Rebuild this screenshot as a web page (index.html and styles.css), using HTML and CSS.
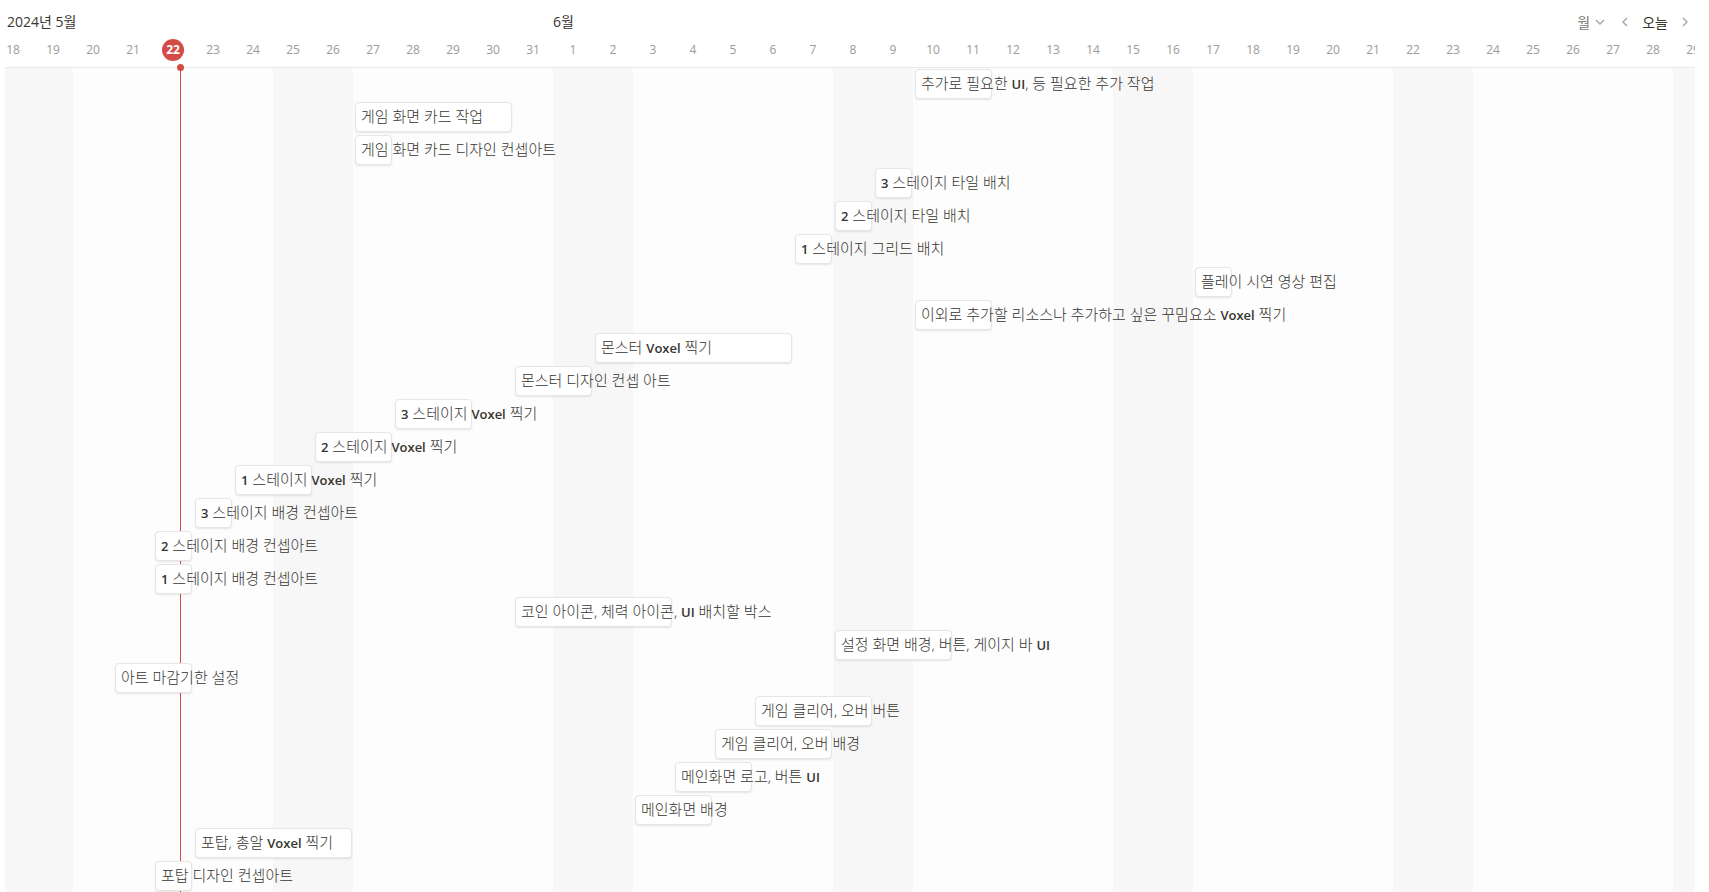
FILE: index.html
```html
<!DOCTYPE html>
<html lang="ko">
<head>
<meta charset="utf-8">
<title>타임라인</title>
<link rel="stylesheet" href="styles.css">
</head>
<body>
<main class="timeline">
  <header class="toolbar">
    <div class="months">
      <span class="month month-first"><span class="num">2024</span>년 <span class="num">5</span>월</span>
      <span class="month month-next"><span class="num">6</span>월</span>
    </div>
    <nav class="controls" aria-label="타임라인 탐색">
      <button class="scale" type="button">월
        <svg class="chevron-down" viewBox="0 0 10 6" aria-hidden="true"><path d="M1 1l4 4 4-4"/></svg>
      </button>
      <button class="step" type="button" aria-label="이전"><svg class="chevron-side" viewBox="0 0 6 10" aria-hidden="true"><path d="M5 1L1 5l4 4"/></svg></button>
      <button class="today" type="button">오늘</button>
      <button class="step" type="button" aria-label="다음"><svg class="chevron-side" viewBox="0 0 6 10" aria-hidden="true"><path d="M1 1l4 4-4 4"/></svg></button>
    </nav>
  </header>
  <div class="days">
    <span>18</span><span>19</span><span>20</span><span>21</span><span><b class="current">22</b></span><span>23</span><span>24</span><span>25</span><span>26</span><span>27</span><span>28</span><span>29</span><span>30</span><span>31</span>
    <span>1</span><span>2</span><span>3</span><span>4</span><span>5</span><span>6</span><span>7</span><span>8</span><span>9</span><span>10</span><span>11</span><span>12</span><span>13</span><span>14</span><span>15</span><span>16</span><span>17</span><span>18</span><span>19</span><span>20</span><span>21</span><span>22</span><span>23</span><span>24</span><span>25</span><span>26</span><span>27</span><span>28</span><span>29</span>
  </div>
  <section class="board">
    <div class="now"></div>
    <div class="rows">
      <div class="row"><div class="bar" style="grid-column: 24 / span 2">추가로 필요한 <span class="en">UI</span>, 등 필요한 추가 작업</div></div>
      <div class="row"><div class="bar" style="grid-column: 10 / span 4">게임 화면 카드 작업</div></div>
      <div class="row"><div class="bar" style="grid-column: 10 / span 1">게임 화면 카드 디자인 컨셉아트</div></div>
      <div class="row"><div class="bar" style="grid-column: 23 / span 1"><span class="en">3</span> 스테이지 타일 배치</div></div>
      <div class="row"><div class="bar" style="grid-column: 22 / span 1"><span class="en">2</span> 스테이지 타일 배치</div></div>
      <div class="row"><div class="bar" style="grid-column: 21 / span 1"><span class="en">1</span> 스테이지 그리드 배치</div></div>
      <div class="row"><div class="bar" style="grid-column: 31 / span 1">플레이 시연 영상 편집</div></div>
      <div class="row"><div class="bar" style="grid-column: 24 / span 2">이외로 추가할 리소스나 추가하고 싶은 꾸밈요소 <span class="en">Voxel</span> 찍기</div></div>
      <div class="row"><div class="bar" style="grid-column: 16 / span 5">몬스터 <span class="en">Voxel</span> 찍기</div></div>
      <div class="row"><div class="bar" style="grid-column: 14 / span 2">몬스터 디자인 컨셉 아트</div></div>
      <div class="row"><div class="bar" style="grid-column: 11 / span 2"><span class="en">3</span> 스테이지 <span class="en">Voxel</span> 찍기</div></div>
      <div class="row"><div class="bar" style="grid-column: 9 / span 2"><span class="en">2</span> 스테이지 <span class="en">Voxel</span> 찍기</div></div>
      <div class="row"><div class="bar" style="grid-column: 7 / span 2"><span class="en">1</span> 스테이지 <span class="en">Voxel</span> 찍기</div></div>
      <div class="row"><div class="bar" style="grid-column: 6 / span 1"><span class="en">3</span> 스테이지 배경 컨셉아트</div></div>
      <div class="row"><div class="bar" style="grid-column: 5 / span 1"><span class="en">2</span> 스테이지 배경 컨셉아트</div></div>
      <div class="row"><div class="bar" style="grid-column: 5 / span 1"><span class="en">1</span> 스테이지 배경 컨셉아트</div></div>
      <div class="row"><div class="bar" style="grid-column: 14 / span 4">코인 아이콘, 체력 아이콘, <span class="en">UI</span> 배치할 박스</div></div>
      <div class="row"><div class="bar" style="grid-column: 22 / span 3">설정 화면 배경, 버튼, 게이지 바 <span class="en">UI</span></div></div>
      <div class="row"><div class="bar" style="grid-column: 4 / span 2">아트 마감기한 설정</div></div>
      <div class="row"><div class="bar" style="grid-column: 20 / span 3">게임 클리어, 오버 버튼</div></div>
      <div class="row"><div class="bar" style="grid-column: 19 / span 3">게임 클리어, 오버 배경</div></div>
      <div class="row"><div class="bar" style="grid-column: 18 / span 2">메인화면 로고, 버튼 <span class="en">UI</span></div></div>
      <div class="row"><div class="bar" style="grid-column: 17 / span 2">메인화면 배경</div></div>
      <div class="row"><div class="bar" style="grid-column: 6 / span 4">포탑, 총알 <span class="en">Voxel</span> 찍기</div></div>
      <div class="row"><div class="bar" style="grid-column: 5 / span 1">포탑 디자인 컨셉아트</div></div>
    </div>
  </section>
</main>
</body>
</html>
```
FILE: styles.css
```css
* {
  box-sizing: border-box;
}

body {
  margin: 0;
  background: #fff;
  color: #37352f;
  font-family: "Open Sans", "Noto Sans CJK KR", sans-serif;
  font-size: 15px;
}

.timeline {
  --day: 40px;
  --shift: -12px;
  display: flex;
  flex-direction: column;
  height: 100vh;
  margin: 0 14px 0 5px;
  overflow: hidden;
}

.toolbar {
  display: flex;
  justify-content: space-between;
  align-items: center;
  flex: none;
  height: 34px;
  padding-top: 10px;
}

.months {
  display: grid;
  grid-template-columns: 548px auto;
  font-size: 14px;
  line-height: 24px;
}

.month {
  white-space: nowrap;
}

.month-first {
  padding-left: 2px;
}

.num {
  font-weight: 500;
  font-size: 14px;
}

.controls {
  display: flex;
  align-items: center;
}

.controls button {
  display: flex;
  align-items: center;
  height: 24px;
  padding: 0;
  border: 0;
  background: none;
  color: inherit;
  font: inherit;
  font-size: 14px;
  cursor: pointer;
}

.controls .scale {
  gap: 5px;
  margin-right: 8px;
  color: #787774;
}

.controls .step {
  justify-content: center;
  width: 24px;
}

.controls .step:last-child {
  width: 20px;
}

.controls .today {
  padding: 0 7px 0 5px;
}

.controls svg {
  fill: none;
  stroke: #a5a4a1;
  stroke-width: 1.4;
}

.chevron-down {
  width: 10px;
  height: 6px;
}

.chevron-side {
  width: 6px;
  height: 10px;
}

.days {
  display: grid;
  grid-template-columns: repeat(43, var(--day));
  flex: none;
  height: 33px;
  margin-left: var(--shift);
  color: #9b9a97;
  font-size: 12px;
  line-height: 32px;
  text-align: center;
}

.current {
  display: inline-block;
  width: 22px;
  height: 22px;
  border-radius: 50%;
  background: #d44c47;
  color: #fff;
  font-weight: 700;
  line-height: 22px;
}

.board {
  position: relative;
  flex: 1;
  border-top: 1px solid #e9e9e8;
}

.rows {
  width: calc(43 * var(--day));
  min-height: 100%;
  margin-left: var(--shift);
  background: repeating-linear-gradient(to right, #f7f7f7 0 80px, #fdfdfd 80px 280px);
}

.now {
  position: absolute;
  top: 0;
  bottom: 0;
  left: 175px;
  width: 1px;
  background: #d44c47;
}

.now::before {
  content: "";
  position: absolute;
  top: -4px;
  left: -3px;
  width: 7px;
  height: 7px;
  border-radius: 50%;
  background: #d44c47;
}

.row {
  display: grid;
  grid-template-columns: repeat(43, var(--day));
  height: 33px;
  padding-top: 1px;
}

.bar {
  position: relative;
  height: 30px;
  margin: 0 1px 0 2px;
  padding-left: 5px;
  border: 1px solid #e6e6e5;
  border-radius: 4px;
  background: #fff;
  box-shadow: 0 1px 2px rgba(15, 15, 15, 0.1);
  font-weight: 300;
  line-height: 27px;
  white-space: nowrap;
}

.en {
  font-weight: 600;
  font-size: 13px;
}
```
